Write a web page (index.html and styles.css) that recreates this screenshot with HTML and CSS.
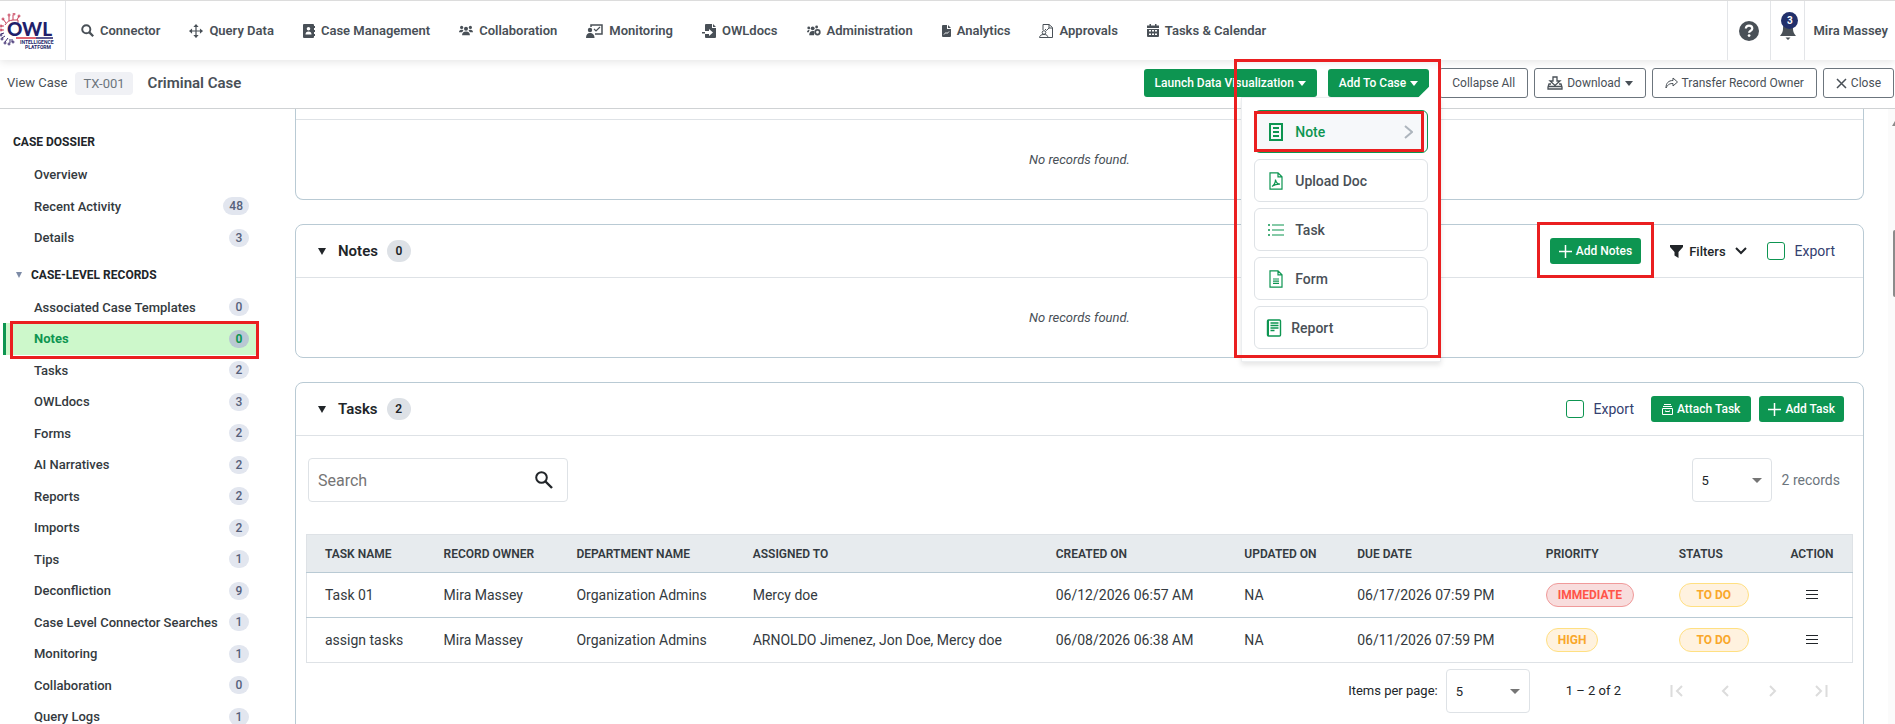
FILE: index.html
```html
<!DOCTYPE html>
<html lang="en">
<head>
  <meta charset="UTF-8" />
  <title>OWL - Criminal Case</title>
  <link rel="stylesheet" href="styles.css">
</head>
<body>
  <header class="topbar">
    <a class="logo" href="#" aria-label="OWL Intelligence Platform">
      <svg width="56" height="38" viewBox="0 0 56 38">
        <g fill="none" stroke="#c8405a" stroke-width="1">
          <path d="M9 8V3M13 7V2M17 7l2-4M6 10L3 6M4 13H1M4 17H1M13 7h5v3"/>
          <circle cx="9" cy="2" r="1"/><circle cx="14" cy="1" r="1"/><circle cx="19" cy="3" r="1"/><circle cx="3" cy="6" r="1"/><circle cx="1" cy="13" r="1"/><circle cx="1" cy="17" r="1"/>
          <path d="M5 12a10 10 0 0 1 8-5"/>
        </g>
        <g fill="none" stroke="#3b2a6e" stroke-width="1">
          <path d="M4 20l-3 1M5 23l-3 2M8 25l-3 4M12 26v3M10 26v4"/>
          <circle cx="1" cy="22" r="1"/><circle cx="2" cy="26" r="1"/><circle cx="5" cy="30" r="1"/><circle cx="9" cy="31" r="1"/><circle cx="13" cy="29" r="1"/>
        </g>
        <path d="M16 25h20" stroke="#d8323f" stroke-width="1.5"/>
        <path d="M36 25h17" stroke="#221f6b" stroke-width="1.5"/>
        <text x="7" y="23" class="logo-name">OWL</text>
        <text x="20" y="31" class="logo-sub">INTELLIGENCE</text>
        <text x="25" y="36" class="logo-sub">PLATFORM</text>
      </svg>
    </a>
    <nav class="nav">
      <a href="#"><svg width="13" height="13" viewBox="0 0 16 16"><circle cx="6.500" cy="6.500" r="5" fill="none" stroke="currentColor" stroke-width="2.400"/><path d="M10 10l5 5" stroke="currentColor" stroke-width="2.800"/></svg>Connector</a>
      <a href="#"><svg width="14" height="14" viewBox="0 0 16 16"><path d="M8 1v14M1 8h14" stroke="currentColor" stroke-width="1.400"/><path d="M8 0l3 3.500H5zM8 16l3-3.500H5zM0 8l3.500-3v6zM16 8l-3.500-3v6z" fill="currentColor"/></svg>Query Data</a>
      <a href="#"><svg width="12" height="14" viewBox="0 0 12 14"><path fill="currentColor" fill-rule="evenodd" d="M1 0h9a1 1 0 0 1 1 1v12a1 1 0 0 1-1 1H1a1 1 0 0 1-1-1V1a1 1 0 0 1 1-1zM5.500 3a1.800 1.800 0 1 0 0 3.600 1.800 1.800 0 0 0 0-3.600zM2.500 10.500h6c0-2-1-3-3-3s-3 1-3 3zM11 2h1v2h-1zM11 6h1v2h-1zM11 10h1v2h-1z"/></svg>Case Management</a>
      <a href="#"><svg width="14" height="11" viewBox="0 0 16 12"><g fill="currentColor"><circle cx="8" cy="4" r="2.300"/><circle cx="3" cy="2.500" r="1.800"/><circle cx="13" cy="2.500" r="1.800"/><path d="M3.500 11.500c0-3 1.500-4.500 4.500-4.500s4.500 1.500 4.500 4.500zM0 8c0-2 1-3 3-3 1 0 2 .3 2 .8C4.700 7 4 7.500 3.300 8zM16 8c0-2-1-3-3-3-1 0-2 .3-2 .8.300 1.200 1 1.700 1.700 2.200z"/></g></svg>Collaboration</a>
      <a href="#"><svg width="17" height="14" viewBox="0 0 17 14"><path d="M5 3V1h11v9H9" fill="none" stroke="currentColor" stroke-width="1.500"/><path d="M8 5l2 2 4-4" fill="none" stroke="currentColor" stroke-width="1.200"/><circle cx="4" cy="6" r="2.200" fill="currentColor"/><path d="M0 14c0-3.500 1.500-5 4-5s4.500 1.500 4.500 5z" fill="currentColor"/></svg>Monitoring</a>
      <a href="#"><svg width="14" height="14" viewBox="0 0 14 14"><path fill="currentColor" d="M4 0h6v4h4v9a1 1 0 0 1-1 1H4a1 1 0 0 1-1-1v-3h4v2l4-3.500L7 5v2H3V1a1 1 0 0 1 1-1zM11 0l3 3h-3zM0 8h3v1.500H0z"/></svg>OWLdocs</a>
      <a href="#"><svg width="14" height="11" viewBox="0 0 16 12"><g fill="currentColor"><circle cx="6.500" cy="3.500" r="2.200"/><circle cx="2" cy="3" r="1.600"/><circle cx="11" cy="2" r="1.600"/><path d="M2.500 11.500c0-3.500 1.500-5 4-5 1 0 1.600.2 2 .5L8 11.500zM0 8c0-2 1-3 3-3L2 8z"/></g><circle cx="12" cy="8" r="2.600" fill="none" stroke="currentColor" stroke-width="2"/></svg>Administration</a>
      <a href="#"><svg width="9" height="12" viewBox="0 0 9 12"><path fill="currentColor" d="M1 0h4v4h4v7a1 1 0 0 1-1 1H1a1 1 0 0 1-1-1V1a1 1 0 0 1 1-1zM6 0l3 3H6z"/><path d="M2 9.500l2-2 1 1 2-2" fill="none" stroke="#fff"/></svg>Analytics</a>
      <a href="#"><svg width="14" height="14" viewBox="0 0 14 14"><g fill="none" stroke="currentColor"><path d="M4 6V.5h6l3.500 3v10H9M10 .5V4h3"/><path d="M6 5l1.500 1.500L10 4"/><circle cx="5" cy="8.500" r="1.800"/><path d="M.5 13.500c.3-2 1.500-3 4.500-3s3.500 1 4 3z"/></g></svg>Approvals</a>
      <a href="#"><svg width="12" height="13" viewBox="0 0 12 13"><path fill="currentColor" fill-rule="evenodd" d="M2.500 0H4v1.500h4V0h1.500v1.500H12V4H0V1.500h2.500zM0 5h12v7a1 1 0 0 1-1 1H1a1 1 0 0 1-1-1zM2 6v1.500h2V6zM5 6v1.500h2V6zM8 6v1.500h2V6zM2 9.500V11h2V9.500zM5 9.500V11h2V9.500zM8 9.500V11h2V9.500z"/></svg>Tasks &amp; Calendar</a>
    </nav>
    <div class="user-area">
      <button class="top-icon" aria-label="Help"><svg width="20" height="20" viewBox="0 0 20 20"><circle cx="10" cy="10" r="10" fill="currentColor"/><path d="M6.800 7.500c.2-2 1.500-2.800 3.200-2.800 1.900 0 3.300 1 3.300 2.700 0 2.300-3.200 2.300-3.200 4.300" fill="none" stroke="#fff" stroke-width="2.200"/><circle cx="10.100" cy="14.600" r="1.400" fill="#fff"/></svg></button>
      <button class="top-icon bell" aria-label="Notifications"><svg width="16" height="18" viewBox="0 0 16 18"><path fill="currentColor" d="M8 1c3.500 0 5 2.500 5 5.500 0 4 1.500 5.500 3 7.500H0c1.500-2 3-3.500 3-7.500C3 3.500 4.500 1 8 1zM5.500 15.500h5L8 18z"/></svg><span class="badge">3</span></button>
      <span class="user-name">Mira Massey</span>
    </div>
  </header>

  <div class="casebar">
    <span class="view-case">View Case</span>
    <span class="case-id">TX-001</span>
    <h1>Criminal Case</h1>
    <div class="case-actions">
      <button class="btn-green">Launch Data Visualization <span class="caret"></span></button>
      <div class="add-wrap">
        <button class="btn-green add-case">Add To Case <span class="caret"></span></button>
        <div class="add-menu">
          <button class="menu-item active">
            <svg width="14" height="18" viewBox="0 0 14 18"><path d="M1 1h12v16H1z" fill="none" stroke="currentColor" stroke-width="2"/><path d="M4 5h6M4 9h6M4 13h6" stroke="currentColor" stroke-width="2"/></svg>
            Note
            <svg class="chev" width="9" height="14" viewBox="0 0 9 14"><path d="M1 1l7 6-7 6" fill="none" stroke="#adb5bd" stroke-width="2"/></svg>
          </button>
          <button class="menu-item">
            <svg width="14" height="18" viewBox="0 0 14 18"><g fill="none" stroke="currentColor" stroke-width="1.200"><path d="M1 .8h8l4 4v12.400H1zM9 .8v4h4"/><path d="M3 14.500c2-1.500 3.500-4 3.500-7M6.500 7.500c.5 3 2 4.500 4.500 4.700-3-.2-5 .3-7.500 1.800"/></g></svg>
            Upload Doc
          </button>
          <button class="menu-item">
            <svg width="18" height="14" viewBox="0 0 18 14"><g fill="currentColor"><circle cx="2" cy="2" r="1"/><circle cx="2" cy="7" r="1"/><circle cx="2" cy="12" r="1"/></g><path d="M5 2h12M5 7h12M5 12h12" stroke="currentColor" stroke-width="1.200"/></svg>
            Task
          </button>
          <button class="menu-item">
            <svg width="14" height="18" viewBox="0 0 14 18"><path d="M1 .8h8l4 4v12.400H1zM9 .8v4h4M4 9h6M4 11.200h6M4 13.400h6" fill="none" stroke="currentColor" stroke-width="1.200"/></svg>
            Form
          </button>
          <button class="menu-item tight">
            <svg width="15" height="18" viewBox="0 0 15 18"><rect x="1" y="1" width="13" height="16" rx="1" fill="none" stroke="currentColor" stroke-width="1.400"/><path d="M2 1v16" stroke="currentColor"/><path d="M4 4h8M4 6.500h8M4 9h8M4 11.500h4" stroke="currentColor" stroke-width="1.300"/></svg>
            Report
          </button>
          <span class="mark mark-note"></span>
        </div>
        <span class="mark mark-menu"></span>
      </div>
      <button class="btn-line">Collapse All</button>
      <button class="btn-line"><svg width="16" height="14" viewBox="0 0 16 14"><path d="M6 1h4v4h3L8 9.500 3 5h3zM4 8H2l-1 3v2h14v-2l-1-3h-2M1 10.500h14" fill="none" stroke="currentColor" stroke-width="1.300"/></svg> Download <span class="caret"></span></button>
      <button class="btn-line"><svg width="13" height="12" viewBox="0 0 13 12"><path d="M8 1l4.500 4L8 9V6.500C5 6.500 3 7 1 11 1 6 3.500 3.500 8 3.500z" fill="none" stroke="currentColor"/></svg> Transfer Record Owner</button>
      <button class="btn-line"><svg width="11" height="11" viewBox="0 0 11 11"><path d="M1 1l9 9M10 1l-9 9" stroke="currentColor" stroke-width="1.500"/></svg> Close</button>
    </div>
  </div>

  <div class="page">
    <aside class="sidebar">
      <h2>CASE DOSSIER</h2>
      <a href="#">Overview</a>
      <a href="#">Recent Activity <span class="count">48</span></a>
      <a href="#">Details <span class="count">3</span></a>
      <h2 class="group"><span class="tri"></span>CASE-LEVEL RECORDS</h2>
      <a href="#">Associated Case Templates <span class="count">0</span></a>
      <a href="#" class="active">Notes <span class="count">0</span><span class="mark mark-side"></span></a>
      <a href="#">Tasks <span class="count">2</span></a>
      <a href="#">OWLdocs <span class="count">3</span></a>
      <a href="#">Forms <span class="count">2</span></a>
      <a href="#">AI Narratives <span class="count">2</span></a>
      <a href="#">Reports <span class="count">2</span></a>
      <a href="#">Imports <span class="count">2</span></a>
      <a href="#">Tips <span class="count">1</span></a>
      <a href="#">Deconfliction <span class="count">9</span></a>
      <a href="#">Case Level Connector Searches <span class="count">1</span></a>
      <a href="#">Monitoring <span class="count">1</span></a>
      <a href="#">Collaboration <span class="count">0</span></a>
      <a href="#">Query Logs <span class="count">1</span></a>
    </aside>

    <main class="content">
      <section class="card cut">
        <div class="card-rest"></div>
        <p class="empty">No records found.</p>
      </section>

      <section class="card">
        <div class="card-head">
          <span class="tri"></span>
          <h3>Notes</h3>
          <span class="total">0</span>
          <div class="head-tools notes-tools">
            <span class="marked"><button class="btn-green small"><svg width="13" height="13" viewBox="0 0 13 13"><path d="M6.500 0v13M0 6.500h13" stroke="currentColor" stroke-width="1.500"/></svg>Add Notes</button><span class="mark mark-add"></span></span>
            <button class="filters"><svg width="13" height="13" viewBox="0 0 13 13"><path d="M0 0h13v2L8.500 7v6l-4-2.500V7L0 2z" fill="currentColor"/></svg>Filters<svg class="down" width="12" height="8" viewBox="0 0 12 8"><path d="M1 1l5 5 5-5" fill="none" stroke="currentColor" stroke-width="2"/></svg></button>
            <label class="export"><input type="checkbox">Export</label>
          </div>
        </div>
        <p class="empty">No records found.</p>
      </section>

      <section class="card">
        <div class="card-head">
          <span class="tri"></span>
          <h3>Tasks</h3>
          <span class="total">2</span>
          <div class="head-tools">
            <label class="export"><input type="checkbox">Export</label>
            <button class="btn-green small attach"><svg width="11" height="11" viewBox="0 0 11 11"><path d="M2 .5h7M1 2.500h9M.5 4.500h10v6H.5zM3.500 6.500v1h4v-1" fill="none" stroke="currentColor"/></svg>Attach Task</button>
            <button class="btn-green small"><svg width="13" height="13" viewBox="0 0 13 13"><path d="M6.500 0v13M0 6.500h13" stroke="currentColor" stroke-width="1.500"/></svg>Add Task</button>
          </div>
        </div>

        <div class="table-tools">
          <div class="search">
            <input type="text" placeholder="Search" aria-label="Search tasks">
            <svg width="18" height="18" viewBox="0 0 18 18"><circle cx="6.500" cy="6.500" r="5.300" fill="none" stroke="#212529" stroke-width="2"/><path d="M10.500 10.500l6.500 6.500" stroke="#212529" stroke-width="2.400"/></svg>
          </div>
          <div class="records">
            <select aria-label="Rows"><option>5</option><option>10</option></select>
            <span>2 records</span>
          </div>
        </div>

        <table class="tasks">
          <colgroup>
            <col class="c-name"><col class="c-owner"><col class="c-dept"><col class="c-assigned"><col class="c-date"><col class="c-updated"><col class="c-date"><col class="c-owner"><col class="c-status"><col class="c-action">
          </colgroup>
          <thead>
            <tr><th>TASK NAME</th><th>RECORD OWNER</th><th>DEPARTMENT NAME</th><th>ASSIGNED TO</th><th>CREATED ON</th><th>UPDATED ON</th><th>DUE DATE</th><th>PRIORITY</th><th>STATUS</th><th class="action">ACTION</th></tr>
          </thead>
          <tbody>
            <tr>
              <td>Task 01</td><td>Mira Massey</td><td>Organization Admins</td><td>Mercy doe</td><td>06/12/2026 06:57 AM</td><td>NA</td><td>06/17/2026 07:59 PM</td>
              <td><span class="tag red">IMMEDIATE</span></td><td><span class="tag wide">TO DO</span></td>
              <td class="action"><button class="row-menu" aria-label="Actions"><svg width="12" height="11" viewBox="0 0 12 11"><path d="M0 1.500h12M0 5.500h12M0 9.500h12" stroke="#212529"/></svg></button></td>
            </tr>
            <tr>
              <td>assign tasks</td><td>Mira Massey</td><td>Organization Admins</td><td>ARNOLDO Jimenez, Jon Doe, Mercy doe</td><td>06/08/2026 06:38 AM</td><td>NA</td><td>06/11/2026 07:59 PM</td>
              <td><span class="tag">HIGH</span></td><td><span class="tag wide">TO DO</span></td>
              <td class="action"><button class="row-menu" aria-label="Actions"><svg width="12" height="11" viewBox="0 0 12 11"><path d="M0 1.500h12M0 5.500h12M0 9.500h12" stroke="#212529"/></svg></button></td>
            </tr>
          </tbody>
        </table>

        <div class="pager">
          <label for="per-page">Items per page:</label>
          <select id="per-page"><option>5</option><option>10</option></select>
          <span class="range">1 – 2 of 2</span>
          <button aria-label="First page" disabled><svg width="14" height="12" viewBox="0 0 14 12"><path d="M1.500 0v12M12 1L7 6l5 5" fill="none" stroke="currentColor" stroke-width="2"/></svg></button>
          <button aria-label="Previous page" disabled><svg width="14" height="12" viewBox="0 0 14 12"><path d="M10 1L5 6l5 5" fill="none" stroke="currentColor" stroke-width="2"/></svg></button>
          <button aria-label="Next page" disabled><svg width="14" height="12" viewBox="0 0 14 12"><path d="M4 1l5 5-5 5" fill="none" stroke="currentColor" stroke-width="2"/></svg></button>
          <button aria-label="Last page" disabled><svg width="14" height="12" viewBox="0 0 14 12"><path d="M12.500 0v12M2 1l5 5-5 5" fill="none" stroke="currentColor" stroke-width="2"/></svg></button>
        </div>
      </section>
    </main>
    <div class="scroll-track"><span class="scroll-up"></span><span class="scroll-thumb"></span></div>
  </div>
</body>
</html>
```
FILE: styles.css
```css
* {
  box-sizing: border-box;
}
body {
  margin: 0;
  height: 100vh;
  display: flex;
  flex-direction: column;
  overflow: hidden;
  background: #fff;
  color: #212529;
  font-family: Roboto, sans-serif;
  font-size: 14px;
  line-height: 1.5;
}
a {
  color: inherit;
  text-decoration: none;
}
button, input, select {
  font-family: inherit;
}
button {
  cursor: pointer;
}
h1, h2, h3, p {
  margin: 0;
}
svg {
  flex: none;
}

/* top bar */
.topbar {
  display: flex;
  flex: none;
  height: 60px;
  border-top: 1px solid #dcdcdc;
  box-shadow: 0 2px 8px rgba(0, 0, 0, 0.1);
  color: #495057;
  font-size: 13px;
  font-weight: 600;
}
.logo {
  width: 66px;
  padding-top: 12px;
  border-right: 1px solid #e3e5e8;
}
.logo-name {
  font: 900 19px Lato, sans-serif;
  fill: #221f6b;
}
.logo-sub {
  font: 700 5px Roboto, sans-serif;
  fill: #221f6b;
}
.nav {
  display: flex;
  flex: 1;
  align-items: center;
  gap: 29px;
  padding-left: 15px;
}
.nav a {
  display: flex;
  align-items: center;
  gap: 6px;
  white-space: nowrap;
}
.user-area {
  display: flex;
}
.top-icon {
  position: relative;
  width: 43px;
  padding: 0;
  border: none;
  border-left: 1px solid #e3e5e8;
  background: none;
  color: #495057;
}
.top-icon svg {
  display: block;
  margin: 0 auto;
}
.badge {
  position: absolute;
  top: 11px;
  left: 10px;
  width: 17px;
  height: 17px;
  border-radius: 50%;
  background: #22306b;
  color: #fff;
  font-size: 10px;
  font-weight: 700;
  line-height: 17px;
}
.bell {
  width: 34px;
}
.user-name {
  display: flex;
  align-items: center;
  padding: 0 7px 0 8px;
  border-left: 1px solid #e3e5e8;
}

/* case bar */
.casebar {
  display: flex;
  flex: none;
  align-items: center;
  height: 49px;
  padding: 0 1px 2px 7px;
  border-bottom: 1px solid #cfd2d4;
  color: #495057;
  font-size: 13px;
}
.case-id {
  margin: 0 15px 0 8px;
  padding: 0 8px;
  border-radius: 4px;
  background: #f0f1f5;
  color: #6c757d;
  line-height: 23px;
}
.casebar h1 {
  font-size: 15px;
  font-weight: 600;
}
.case-actions {
  display: flex;
  align-items: center;
  gap: 6px;
  margin-left: auto;
}
.btn-green, .btn-line {
  display: flex;
  align-items: center;
  gap: 4px;
  height: 28px;
  border: none;
  border-radius: 3px;
  background: #0d9551;
  color: #fff;
  font-size: 12px;
  white-space: nowrap;
}
.btn-green {
  padding: 0 11px;
  font-weight: 500;
}
.btn-line {
  height: 30px;
  padding: 0 12px;
  border: 1px solid #6c757d;
  background: #fff;
  color: #495057;
}
.caret {
  border: 4px solid transparent;
  border-top: 5px solid currentColor;
  border-bottom: none;
}
.add-wrap {
  position: relative;
  margin: 0 4px 0 5px;
}
.add-menu {
  position: absolute;
  z-index: 5;
  top: 100%;
  right: -12px;
  width: 200px;
  padding: 12px;
  display: flex;
  flex-direction: column;
  gap: 6px;
  background: #fff;
  border: 1px solid #eceef0;
  box-shadow: 0 3px 5px rgba(0, 0, 0, 0.1);
}
/* arrow of the menu */
.add-menu::before {
  content: "";
  position: absolute;
  top: -8px;
  right: 3px;
  width: 16px;
  height: 16px;
  background: #fff;
  transform: rotate(45deg);
}
.menu-item {
  position: relative;
  display: flex;
  align-items: center;
  gap: 10px;
  height: 43px;
  padding: 0 14px 0 12px;
  border: 1px solid #dee2e6;
  border-radius: 6px;
  background: #fff;
  color: #495057;
  font-size: 14px;
  font-weight: 500;
}
.menu-item svg {
  width: 18px;
  color: #0d9551;
}
.menu-item.active {
  border-color: #0d9551;
  background: #f6f8fa;
  color: #0d9551;
}
.menu-item.tight {
  gap: 8px;
  padding-left: 10px;
}
.menu-item .chev {
  width: 9px;
  margin-left: auto;
}

/* red highlight frames */
.mark {
  position: absolute;
  z-index: 6;
  border: 3px solid #ea1f20;
  pointer-events: none;
}
.mark-menu {
  top: -10px;
  right: -12px;
  width: 207px;
  height: 299px;
}
.mark-note {
  top: 13px;
  left: 12px;
  right: 16px;
  height: 41px;
}
.mark-side {
  inset: -2px 0 -4px 4px;
}
.mark-add {
  inset: -16px -13px -14px -13px;
}
.marked {
  position: relative;
}

/* page */
.page {
  display: flex;
  flex: 1;
  min-height: 0;
}
.sidebar {
  width: 259px;
  flex: none;
  padding: 12px 0 0 3px;
  font-size: 13px;
  font-weight: 500;
  color: #343a40;
}
.sidebar h2 {
  padding: 12px 10px 8px;
  font-size: 12px;
  line-height: 18px;
  font-weight: 700;
  color: #212529;
}
.sidebar h2.group {
  display: flex;
  align-items: center;
  gap: 9px;
  padding-left: 13px;
}
.tri {
  border: 4px solid transparent;
  border-top: 7px solid #212529;
  border-bottom: none;
}
.group .tri {
  border-width: 6px 3px 0;
  border-top-color: #7d8ba6;
}
.sidebar a {
  position: relative;
  display: flex;
  justify-content: space-between;
  align-items: center;
  padding: 6px 10px 6px 28px;
  border-left: 3px solid transparent;
}
.sidebar a.active {
  border-left-color: #0d9551;
  background: #cdf8cb;
  color: #0d9551;
  font-weight: 700;
}
.count {
  min-width: 20px;
  padding: 0 6px;
  border-radius: 9px;
  background: #e2e6ef;
  color: #56607a;
  font-size: 12px;
  line-height: 18px;
  text-align: center;
}
.active .count {
  background: #b9c8d3;
  color: #0d9551;
}
.content {
  flex: 1;
  min-width: 0;
  overflow: hidden;
  padding: 0 24px 0 36px;
}
.card {
  margin-bottom: 24px;
  border: 1px solid #b9cad4;
  border-radius: 8px;
}
.card.cut {
  border-top: none;
  border-radius: 0 0 8px 8px;
}
.card-rest {
  height: 11px;
  border-bottom: 1px solid #dee2e6;
}
.card-head {
  display: flex;
  align-items: center;
  height: 53px;
  padding: 0 19px 0 22px;
  border-bottom: 1px solid #dee2e6;
}
.card-head h3 {
  margin: 0 9px 0 12px;
  font-size: 15px;
  font-weight: 600;
}
.total {
  min-width: 24px;
  border-radius: 11px;
  background: #dde1e6;
  font-size: 12px;
  font-weight: 600;
  line-height: 22px;
  text-align: center;
}
.head-tools {
  display: flex;
  align-items: center;
  gap: 8px;
  margin-left: auto;
}
.notes-tools {
  gap: 20px;
  padding-right: 9px;
}
.notes-tools .filters {
  margin-left: 9px;
}
.small {
  height: 26px;
  padding: 0 9px;
}
.attach {
  margin-left: 9px;
  padding: 0 11px;
}
.filters {
  display: flex;
  align-items: center;
  gap: 6px;
  padding: 0;
  border: none;
  background: none;
  color: #212529;
  font-size: 13px;
  font-weight: 500;
}
.down {
  margin-left: 3px;
}
.export {
  display: flex;
  align-items: center;
  gap: 10px;
  color: #33406f;
}
.export input {
  appearance: none;
  width: 18px;
  height: 18px;
  margin: 0;
  border: 1px solid #0d9551;
  border-radius: 3px;
}
.empty {
  height: 79px;
  line-height: 79px;
  text-align: center;
  font-style: italic;
  font-size: 13px;
  color: #495057;
}
.table-tools {
  display: flex;
  justify-content: space-between;
  padding: 22px 23px 32px 12px;
}
.search {
  display: flex;
  align-items: center;
  width: 260px;
  height: 44px;
  padding: 0 14px 0 9px;
  border: 1px solid #dee2e6;
  border-radius: 4px;
}
.search input {
  flex: 1;
  min-width: 0;
  padding: 0;
  border: none;
  font-size: 16px;
}
.search input::placeholder {
  color: #757575;
}
.records {
  display: flex;
  align-items: center;
  gap: 10px;
  color: #6c757d;
}
select {
  appearance: none;
  width: 80px;
  height: 44px;
  padding: 0 9px;
  border: 1px solid #dee2e6;
  border-radius: 4px;
  background: #fff url("data:image/svg+xml,%3Csvg xmlns='http://www.w3.org/2000/svg' width='10' height='5'%3E%3Cpath d='M0 0h10L5 5z' fill='%23757575'/%3E%3C/svg%3E") no-repeat right 9px center;
  font-size: 13px;
  color: #212529;
}
.tasks {
  width: calc(100% - 20px);
  margin-left: 10px;
  border-collapse: collapse;
  table-layout: fixed;
  border: 1px solid #dee2e6;
}
.c-name { width: 7.7%; }
.c-owner { width: 8.6%; }
.c-dept { width: 11.4%; }
.c-assigned { width: 19.6%; }
.c-date { width: 12.2%; }
.c-updated { width: 7.3%; }
.c-status { width: 7.2%; }
.c-action { width: 5.2%; }
.tasks th, .tasks td {
  height: 45px;
  padding: 0 0 0 18px;
  border-bottom: 1px solid #b9cad4;
  text-align: left;
  white-space: nowrap;
  color: #343a40;
}
.tasks tbody tr:last-child td {
  border-bottom-color: #dee2e6;
}
.tasks th {
  height: 38px;
  background: #e7ebee;
  font-size: 12px;
  font-weight: 600;
}
.tasks .action {
  padding: 0;
  text-align: center;
}
.row-menu {
  padding: 0;
  border: none;
  background: none;
}
.tag {
  display: inline-block;
  padding: 0 11px;
  border: 1px solid #ffe082;
  border-radius: 12px;
  background: #fff2df;
  color: #f9a72b;
  font-size: 12px;
  font-weight: 700;
  line-height: 22px;
  vertical-align: middle;
}
.tag.wide {
  min-width: 70px;
  text-align: center;
}
.tag.red {
  border-color: #f09a9a;
  background: #f8dddd;
  color: #ff5449;
}
.pager {
  display: flex;
  align-items: center;
  justify-content: flex-end;
  padding: 6px 18px 24px 0;
  font-size: 13px;
}
.pager label {
  margin-right: 8px;
}
.pager select {
  width: 84px;
}
.range {
  margin: 0 32px 0 36px;
}
.pager button {
  width: 48px;
  padding: 0;
  border: none;
  background: none;
  color: #dcdcdc;
}
.pager svg {
  display: block;
  margin: 0 auto;
}

/* scrollbar at the window edge */
.scroll-track {
  width: 7px;
  flex: none;
  background: #fbfbfb;
}
.scroll-up {
  display: block;
  margin: 12px 0 104px 4px;
  border-left: 3px solid transparent;
  border-bottom: 5px solid #8b8b8b;
}
.scroll-thumb {
  display: block;
  height: 67px;
  margin-left: 5px;
  border-radius: 4px 0 0 4px;
  background: #8b8b8b;
}
```
